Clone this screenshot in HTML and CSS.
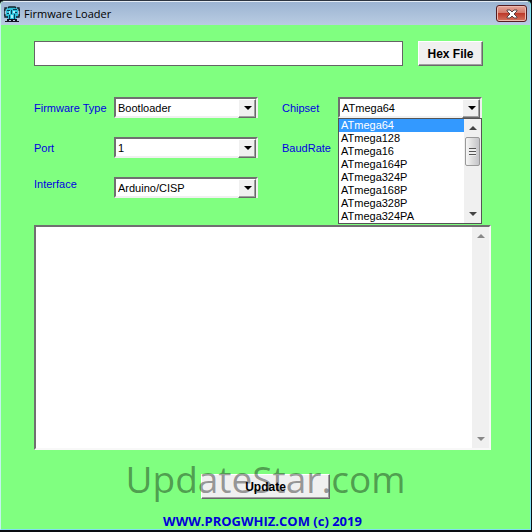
FILE: index.html
```
<!DOCTYPE html>
<html lang="en">
<head>
    <meta charset="UTF-8">
    <meta name="viewport" content="width=device-width, initial-scale=1.0">
    <title>Firmware Loader</title>
    <link rel="stylesheet" href="styles.css">
</head>
<body>

    <div class="window">
        <!-- Title bar -->
        <header class="titlebar">
            <svg class="app-icon" width="16" height="16" viewBox="0 0 16 16">
                <path d="M4 1h8l2 3v6l-2 3H4l-2-3V4z" fill="#2fc0d8"/>
                <path d="M4 2l1-1h6l1 1M3 2H1v2H0v5h1v2h2M13 2h2v2h1v5h-1v2h-2" fill="none" stroke="#10222c" stroke-width="1.4"/>
                <path d="M3 4h3v1H3zM9 3h4v1H9zM3 7h2v1H3zM7 4h1v4H7zM11 6h2v1h-2zM5 9h1v4H5zM10 8h1v5h-1zM3 10h1v2H3zM12 10h1v2h-1z" fill="#0a3c58"/>
                <path d="M5 5h1v3H5zM9 5h2v2H9zM7 9h2v3H7z" fill="#a8f2fc"/>
                <path d="M3 13h10v1H3zM1 15h2v-1h2v1h2v-1h2v1h2v-1h2v1h2v1H1z" fill="#112"/>
            </svg>
            <h1>Firmware Loader</h1>
            <button type="button" class="close-btn" aria-label="Close">
                <svg width="12" height="10" viewBox="0 0 12 10">
                    <path d="M1 1h3l2 2 2-2h3v1L8 5l3 3v1H8L6 7 4 9H1V8l3-3-3-3z" fill="#fff" stroke="#5a4448" stroke-width="1"/>
                </svg>
            </button>
        </header>

        <form class="content">
            <!-- File to load -->
            <div class="file-row">
                <input type="text" class="file-input" aria-label="Hex File">
                <button type="button" class="btn">Hex File</button>
            </div>

            <!-- Options -->
            <div class="options">
                <label for="firmwareType">Firmware Type</label>
                <div class="combo">
                    <select id="firmwareType">
                        <option>Bootloader</option>
                    </select>
                </div>

                <label for="chipset" class="second">Chipset</label>
                <div class="combo">
                    <select id="chipset">
                        <option>ATmega64</option>
                    </select>
                    <div class="dropdown">
                        <ul class="dropdown-list">
                            <li class="selected">ATmega64</li>
                            <li>ATmega128</li>
                            <li>ATmega16</li>
                            <li>ATmega164P</li>
                            <li>ATmega324P</li>
                            <li>ATmega168P</li>
                            <li>ATmega328P</li>
                            <li>ATmega324PA</li>
                        </ul>
                        <div class="scrollbar">
                            <span class="arrow up"></span>
                            <span class="thumb"></span>
                            <span class="arrow down"></span>
                        </div>
                    </div>
                </div>

                <label for="port">Port</label>
                <div class="combo">
                    <select id="port">
                        <option>1</option>
                    </select>
                </div>

                <label for="baudRate" class="second">BaudRate</label>
                <div class="combo">
                    <select id="baudRate"></select>
                </div>

                <label for="interface" class="top">Interface</label>
                <div class="combo">
                    <select id="interface">
                        <option>Arduino/CISP</option>
                    </select>
                </div>
            </div>

            <!-- Output log -->
            <div class="log">
                <textarea aria-label="Output"></textarea>
                <div class="scrollbar disabled">
                    <span class="arrow up"></span>
                    <span class="arrow down"></span>
                </div>
            </div>

            <div class="actions">
                <button type="button" class="btn update-btn">Update</button>
                <span class="watermark">UpdateStar.com</span>
            </div>

            <footer>WWW.PROGWHIZ.COM (c) 2019</footer>
        </form>
    </div>

</body>
</html>
```

FILE: styles.css
```
* {
    box-sizing: border-box;
}

body {
    margin: 0;
    background-color: #0a0d12;
    font-family: "Liberation Sans", Arial, sans-serif;
    font-size: 11px;
    color: #000;
}

.window {
    display: flex;
    flex-direction: column;
    min-height: calc(100vh - 2px);
    margin-right: 1px;
    border: 1px solid #7fe0ee;
    border-top-color: #2c3440;
    border-left-color: #c4f4ee;
    border-radius: 5px 5px 0 0;
    background-color: #80ff80;
    overflow: hidden;
}

/* Title bar */
.titlebar {
    display: flex;
    align-items: center;
    height: 24px;
    padding: 0 3px;
    border-top: 1px solid #e4ecf4;
    background: linear-gradient(#9cb4d2, #b9cce2);
}

.titlebar h1 {
    flex: 1;
    margin: 0;
    padding-left: 4px;
    font-family: "Open Sans", "Noto Sans", sans-serif;
    font-size: 11px;
    font-weight: normal;
}

.close-btn {
    display: flex;
    align-items: center;
    justify-content: center;
    width: 31px;
    height: 17px;
    padding: 0;
    border: 1px solid #541c20;
    border-radius: 3px;
    background: linear-gradient(#e5a79b 0%, #d4796b 45%, #bd3a2b 50%, #d5735f 100%);
    box-shadow: inset 0 0 0 1px #edb9b0;
}

/* Form */
.content {
    display: flex;
    flex: 1;
    flex-direction: column;
    padding: 16px 33px 0;
}

.file-row {
    display: flex;
    gap: 15px;
    margin: 0 14px 31px 0;
}

.file-input {
    flex: 1;
    min-width: 0;
    height: 25px;
    border: 1px solid #646464;
    background-color: #fff;
}

.btn {
    width: 65px;
    height: 25px;
    padding: 0;
    border: 1px solid;
    border-color: #fff #696969 #696969 #fff;
    background-color: #f0f0f0;
    box-shadow: inset -1px -1px 0 #a0a0a0;
    font-family: inherit;
    font-size: 12px;
    font-weight: bold;
    color: #000;
}

.options {
    display: grid;
    grid-template-columns: 80px 1fr 80px 1fr;
    grid-auto-rows: 21px;
    row-gap: 19px;
    align-items: center;
    margin: 0 15px 27px 0;
}

.options label {
    line-height: 14px;
    color: #0000e0;
}

.options .second {
    padding-left: 24px;
}

.options .top {
    align-self: start;
}

.combo {
    position: relative;
    height: 21px;
}

.combo select {
    width: 100%;
    height: 21px;
    padding: 0 20px 0 2px;
    border: 2px solid;
    border-color: #707070 #f0f0f0 #f0f0f0 #707070;
    border-radius: 0;
    background-color: #fff;
    appearance: none;
    font-family: inherit;
    font-size: 11px;
    color: #000;
}

.combo::before {
    content: "";
    position: absolute;
    top: 2px;
    right: 2px;
    width: 16px;
    height: 17px;
    border: 1px solid;
    border-color: #fff #696969 #696969 #fff;
    background-color: #f0f0f0;
    box-shadow: inset -1px -1px 0 #a0a0a0;
    pointer-events: none;
}

.combo::after {
    content: "";
    position: absolute;
    top: 9px;
    right: 6px;
    border: 4px solid transparent;
    border-top-color: #000;
    border-bottom: 0;
    pointer-events: none;
}

/* Open list under the chipset box */
.dropdown {
    position: absolute;
    z-index: 2;
    top: 100%;
    left: 0;
    right: 0;
    display: flex;
    border: 1px solid #555;
    background-color: #fff;
}

.dropdown-list {
    flex: 1;
    margin: 0;
    padding: 0;
    list-style: none;
}

.dropdown-list li {
    height: 13px;
    padding-left: 2px;
    line-height: 13px;
}

.dropdown-list .selected {
    background-color: #3399ff;
    color: #fff;
}

.scrollbar {
    display: flex;
    flex-direction: column;
    align-items: center;
    width: 17px;
    padding: 7px 0;
    background-color: #f0f0f0;
}

.arrow {
    border: 4px solid transparent;
}

.arrow.up {
    border-top: 0;
    border-bottom-color: #444;
}

.arrow.down {
    margin-top: auto;
    border-bottom: 0;
    border-top-color: #444;
}

.disabled .arrow.up {
    border-bottom-color: #888;
}

.disabled .arrow.down {
    border-top-color: #888;
}

.thumb {
    display: flex;
    align-items: center;
    justify-content: center;
    width: 15px;
    height: 29px;
    margin-top: 7px;
    border: 1px solid #999;
    border-radius: 2px;
    background: linear-gradient(to right, #f6f6f6, #dcdcdc 50%, #c4c4c8);
}

.thumb::before {
    content: "";
    width: 7px;
    height: 8px;
    background: repeating-linear-gradient(#555 0 1px, #eee 1px 3px);
}

/* Log */
.log {
    display: flex;
    flex: 1;
    margin-right: 6px;
    border: 2px solid;
    border-color: #707070 #f8f8f8 #f8f8f8 #707070;
    background-color: #fff;
}

.log textarea {
    flex: 1;
    min-width: 0;
    padding: 2px;
    border: 0;
    background-color: #fff;
    font: inherit;
    resize: none;
}

.actions {
    position: relative;
    display: flex;
    justify-content: center;
    margin-top: 24px;
}

.update-btn {
    width: 129px;
}

.watermark {
    position: absolute;
    bottom: 0;
    left: 50%;
    transform: translateX(-50%);
    font-family: "Open Sans", "Noto Sans", sans-serif;
    font-size: 37px;
    line-height: 40px;
    color: rgba(0, 0, 0, 0.4);
    pointer-events: none;
}

footer {
    margin-top: 14px;
    padding-right: 6px;
    line-height: 16px;
    text-align: center;
    font-family: "Comic Sans MS", "Open Sans", sans-serif;
    font-size: 13px;
    font-weight: bold;
    color: #0000d8;
}
```
